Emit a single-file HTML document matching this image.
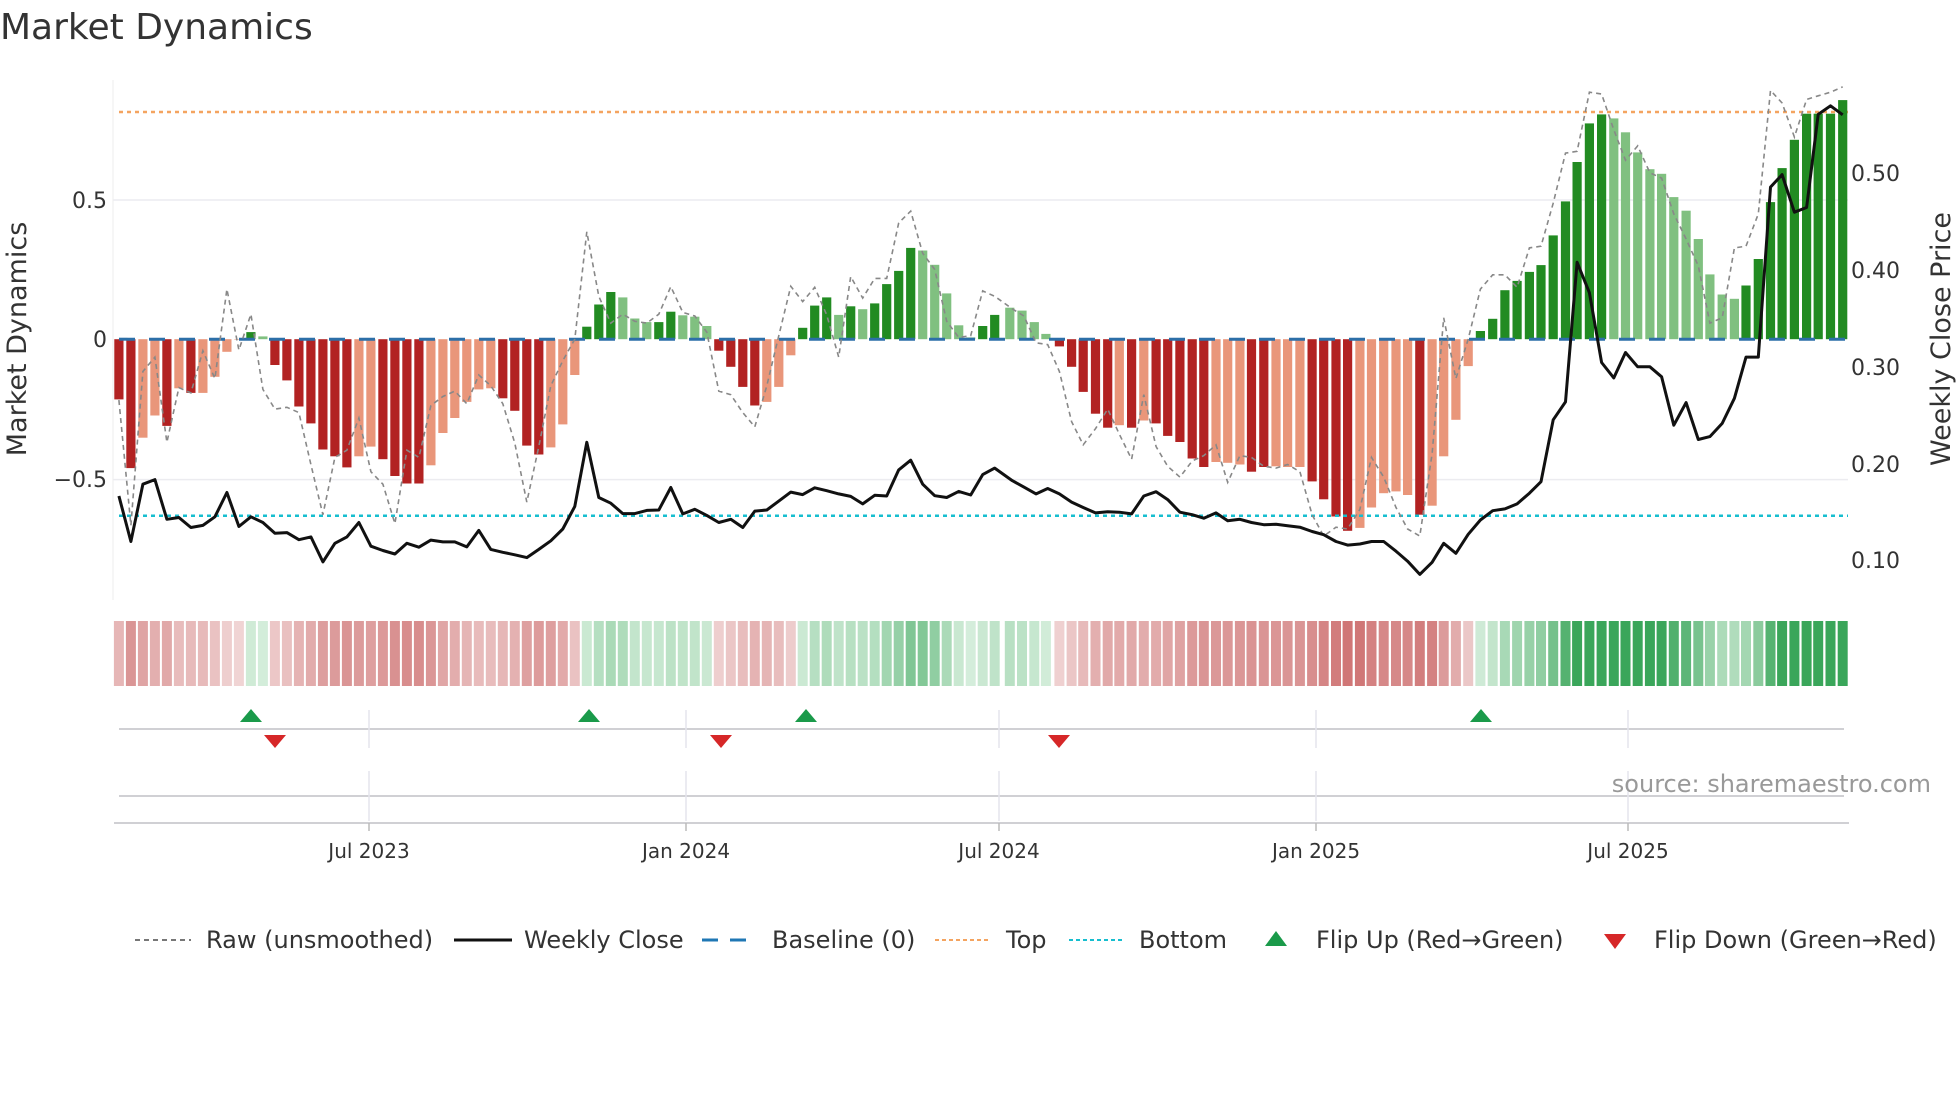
<!DOCTYPE html>
<html><head><meta charset="utf-8"><style>
html,body{margin:0;padding:0;background:#fff;width:1960px;height:1102px;overflow:hidden}
svg text{font-family:"DejaVu Sans","Liberation Sans",sans-serif}
</style></head><body>
<svg id="s" width="1960" height="1102" viewBox="0 0 1960 1102">
<rect width="1960" height="1102" fill="#fff"/>
<text x="0" y="39" font-size="36" fill="#333">Market Dynamics</text>
<g id="g"></g>
<text transform="translate(26,339) rotate(-90)" text-anchor="middle" font-size="27" fill="#333">Market Dynamics</text>
<text transform="translate(1950,339) rotate(-90)" text-anchor="middle" font-size="27" fill="#333">Weekly Close Price</text>
<g font-size="22" fill="#333" text-anchor="end">
<text x="107" y="208">0.5</text><text x="107" y="347">0</text><text x="107" y="487">−0.5</text>
</g>
<g font-size="22" fill="#333">
<text x="1851" y="181">0.50</text><text x="1851" y="278">0.40</text><text x="1851" y="375">0.30</text><text x="1851" y="472">0.20</text><text x="1851" y="568">0.10</text>
</g>
<g font-size="20" fill="#333" text-anchor="middle">
<text x="369" y="858">Jul 2023</text><text x="686" y="858">Jan 2024</text><text x="999" y="858">Jul 2024</text><text x="1316" y="858">Jan 2025</text><text x="1628" y="858">Jul 2025</text>
</g>
<text x="1931" y="792" text-anchor="end" font-size="24" fill="#999">source: sharemaestro.com</text>
<g font-size="24" fill="#333">
<line x1="135" y1="940" x2="191" y2="940" stroke="#777" stroke-width="2" stroke-dasharray="5 4"/><text x="206" y="948">Raw (unsmoothed)</text>
<line x1="454" y1="940" x2="512" y2="940" stroke="#111" stroke-width="3"/><text x="524" y="948">Weekly Close</text>
<line x1="702" y1="940" x2="757" y2="940" stroke="#1f77b4" stroke-width="3" stroke-dasharray="16 12"/><text x="772" y="948">Baseline (0)</text>
<line x1="935" y1="940" x2="991" y2="940" stroke="#f4a460" stroke-width="2" stroke-dasharray="4 3"/><text x="1006" y="948">Top</text>
<line x1="1069" y1="940" x2="1125" y2="940" stroke="#17becf" stroke-width="2" stroke-dasharray="4 3"/><text x="1139" y="948">Bottom</text>
<polygon points="1265,946 1287,946 1276,931" fill="#1a9a4a"/><text x="1316" y="948">Flip Up (Red→Green)</text>
<polygon points="1604,934 1626,934 1615,949" fill="#d62728"/><text x="1654" y="948">Flip Down (Green→Red)</text>
</g>
</svg>
<script>
var Y=function(z){return 60+z*0.358};
var z1=[[948,'D'],[1140,'D'],[1055,'L'],[993,'L'],[1022,'D'],[917,'L'],[930,'D'],[930,'L'],[885,'L'],[815,'L'],[780,'L'],[760,'G'],[772,'g'],[852,'D'],[895,'D'],[968,'D'],[1015,'D'],[1088,'D'],[1107,'D'],[1138,'D'],[1107,'L'],[1080,'L'],[1115,'D'],[1162,'D'],[1183,'D'],[1183,'D'],[1132,'L'],[1042,'L'],[1000,'L'],[955,'L'],[920,'L'],[917,'L'],[945,'D'],[980,'D'],[1077,'D'],[1102,'D'],[1082,'L'],[1018,'L'],[880,'L'],[745,'G'],[683,'G'],[648,'G'],[663,'g'],[722,'g'],[732,'g'],[732,'G'],[703,'G'],[713,'g'],[717,'g'],[743,'g'],[812,'D'],[857,'D'],[913,'D'],[965,'D'],[955,'L'],[913,'L'],[825,'L'],[748,'G'],[686,'G'],[663,'G'],[712,'g'],[688,'G'],[696,'g'],[680,'G'],[626,'G'],[589,'G'],[525,'G'],[532,'g'],[572,'g'],[652,'g'],[741,'g'],[775,'g'],[743,'G'],[712,'G']];
var z2=[[16,692,'g'],[36,700,'g'],[56,732,'g'],[75,765,'g'],[97,800,'D'],[117,857,'D'],[136,927,'D'],[156,988,'D'],[176,1027,'D'],[195,1020,'L'],[215,1027,'D'],[235,1007,'L'],[255,1015,'D'],[274,1050,'D'],[294,1067,'D'],[314,1113,'D'],[333,1137,'D'],[353,1123,'L'],[372,1125,'L'],[392,1130,'L'],[411,1150,'D'],[431,1137,'D'],[451,1135,'L'],[470,1137,'L'],[490,1137,'L'],[510,1177,'D'],[529,1227,'D'],[549,1275,'D'],[568,1315,'D'],[588,1307,'L'],[607,1250,'L'],[627,1210,'L'],[647,1205,'L'],[666,1215,'L'],[686,1270,'D'],[706,1245,'L'],[725,1107,'L'],[745,1005,'L'],[765,855,'L'],[785,757,'G'],[805,723,'G'],[825,643,'G'],[845,617,'G'],[865,592,'G'],[884,573,'G'],[904,490,'G'],[924,395,'G'],[943,285,'G'],[963,177,'G'],[983,152,'G'],[1003,163,'g'],[1022,202,'g'],[1042,258,'g'],[1062,305,'g'],[1081,318,'g'],[1101,383,'g'],[1121,421,'g'],[1141,500,'g'],[1160,599,'g'],[1180,655,'g'],[1200,667,'g'],[1219,630,'G'],[1239,556,'G'],[1259,397,'G'],[1278,302,'G'],[1298,223,'G'],[1318,150,'G'],[1337,150,'G'],[1357,150,'G'],[1377,112,'G']];
var bars=[];
z1.forEach(function(b,k){bars.push([100+(33+20.9*k)*0.574,Y(b[0]),b[1]])});
z2.forEach(function(b){bars.push([1000+b[0]*0.612,Y(b[1]),b[2]])});
var col={D:'#b22222',L:'#e9967a',G:'#228b22',g:'#80c080'};
var Z=339.2,h='';
h+='<line x1="113" y1="200" x2="1848" y2="200" stroke="#ececf0" stroke-width="1.5"/>';
h+='<line x1="113" y1="479.6" x2="1848" y2="479.6" stroke="#ececf0" stroke-width="1.5"/>';
h+='<line x1="113" y1="80" x2="113" y2="600" stroke="#eee" stroke-width="1"/>';
h+='<line x1="119" y1="112" x2="1848" y2="112" stroke="#f4a460" stroke-width="2.5" stroke-dasharray="4 4"/>';
bars.forEach(function(b){var y=b[1],top=Math.min(y,Z),hh=Math.abs(y-Z);if(hh<0.5)hh=0.5;
h+='<rect x="'+(b[0]-4.6).toFixed(1)+'" y="'+top.toFixed(1)+'" width="9.2" height="'+hh.toFixed(1)+'" fill="'+col[b[2]]+'"/>';});
h+='<line x1="119" y1="339.2" x2="1848" y2="339.2" stroke="#2c6fa8" stroke-width="3" stroke-dasharray="16 14"/>';
h+='<line x1="119" y1="515.7" x2="1848" y2="515.7" stroke="#17becf" stroke-width="2.5" stroke-dasharray="4 4"/>';
var r1=[950,1300,870,830,1068,915,930,812,890,640,810,710,920,975,970,985,1130,1270,1110,1090,1000,1150,1185,1295,1090,1110,965,940,925,960,880,910,960,1070,1235,1080,910,840,780,480,660,735,710,730,735,710,633,705,715,760,925,935,985,1025,910,770,632,675,635,712,830,605,665,610,610,455,422,540,585,730,775,770,645,660];
var r2=[[20,695],[39,715],[59,790],[78,795],[97,870],[117,1010],[136,1075],[156,1030],[176,975],[195,1045],[215,1115],[235,935],[255,1080],[274,1135],[294,1165],[314,1120],[333,1105],[353,1075],[372,1180],[392,1105],[411,1110],[431,1135],[451,1140],[470,1130],[490,1150],[510,1270],[529,1330],[549,1305],[568,1310],[588,1255],[607,1110],[627,1165],[647,1250],[666,1310],[686,1330],[706,1100],[725,720],[745,890],[765,780],[785,640],[805,600],[825,600],[845,635],[865,525],[884,520],[904,400],[924,260],[943,255],[963,90],[983,95],[1003,195],[1022,280],[1042,240],[1062,315],[1081,330],[1101,430],[1121,500],[1141,575],[1160,735],[1180,720],[1200,525],[1219,520],[1239,430],[1259,85],[1278,120],[1298,215],[1318,110],[1337,100],[1357,90],[1377,75]];
var p=[];r1.forEach(function(v,k){p.push((100+(33+20.9*k)*0.574).toFixed(1)+','+Y(v).toFixed(1))});
r2.forEach(function(v){p.push((1000+v[0]*0.612).toFixed(1)+','+Y(v[1]).toFixed(1))});
h+='<polyline points="'+p.join(' ')+'" fill="none" stroke="#888" stroke-width="1.6" stroke-dasharray="5 4"/>';
var c1=[1218,1345,1185,1172,1283,1278,1306,1300,1276,1208,1303,1276,1292,1322,1320,1340,1332,1402,1350,1332,1292,1358,1370,1380,1350,1361,1341,1346,1346,1360,1314,1367,1375,1382,1390,1367,1343,1310,1247,1068,1222,1238,1267,1267,1258,1257,1194,1268,1255,1272,1292,1283,1306,1260,1257,1232,1207,1214,1195,1203,1212,1219,1240,1216,1218,1145,1118,1185,1217,1222,1205,1215,1158,1140];
var c2=[[20,1175],[39,1193],[59,1212],[78,1197],[97,1212],[117,1235],[136,1250],[156,1265],[176,1262],[195,1263],[215,1268],[235,1218],[255,1206],[274,1228],[294,1263],[314,1270],[333,1280],[353,1265],[372,1287],[392,1283],[411,1292],[431,1298],[451,1297],[470,1301],[490,1305],[510,1317],[529,1326],[549,1345],[568,1355],[588,1352],[607,1345],[627,1345],[647,1372],[666,1400],[686,1437],[706,1403],[725,1350],[745,1378],[765,1325],[785,1285],[805,1259],[825,1254],[845,1240],[865,1210],[884,1178],[904,1005],[924,955],[943,565],[963,650],[983,845],[1003,888],[1022,817],[1042,857],[1062,857],[1081,885],[1101,1020],[1121,957],[1141,1060],[1160,1052],[1180,1015],[1200,945],[1219,830],[1239,830],[1259,355],[1278,320],[1298,425],[1318,412],[1337,152],[1357,128],[1377,153]];
p=[];c1.forEach(function(v,k){p.push((100+(33+20.9*k)*0.574).toFixed(1)+','+Y(v).toFixed(1))});
c2.forEach(function(v){p.push((1000+v[0]*0.612).toFixed(1)+','+Y(v[1]).toFixed(1))});
h+='<polyline points="'+p.join(' ')+'" fill="none" stroke="#111" stroke-width="3" stroke-linejoin="round"/>';
function mix(a,b,t){return 'rgb('+a.map(function(x,i){return Math.round(x+(b[i]-x)*t)}).join(',')+')'}
bars.forEach(function(b){var v=(Z-b[1])/277;var s=(b[2]=='D'||b[2]=='L')?'r':'g';var t=Math.min(1,Math.abs(v)/0.75);var c;
if(s=='r')c=mix([240,212,212],[205,110,110],t);else c=mix([214,238,220],[58,166,90],Math.min(1,Math.abs(v)/0.6));
h+='<rect x="'+(b[0]-5).toFixed(1)+'" y="621" width="10" height="65" fill="'+c+'"/>';});
h+='<line x1="119" y1="729" x2="1844" y2="729" stroke="#d0d0d4" stroke-width="2"/>';
h+='<line x1="119" y1="796" x2="1844" y2="796" stroke="#d0d0d4" stroke-width="2"/>';
h+='<line x1="114" y1="823" x2="1849" y2="823" stroke="#d0d0d4" stroke-width="2"/>';
[369,686,999,1316,1628].forEach(function(x){h+='<line x1="'+x+'" y1="710" x2="'+x+'" y2="748" stroke="#e4e4ec" stroke-width="1.5"/><line x1="'+x+'" y1="771" x2="'+x+'" y2="821" stroke="#e4e4ec" stroke-width="1.5"/><line x1="'+x+'" y1="823" x2="'+x+'" y2="831" stroke="#bbb" stroke-width="1.5"/>';});
[251,589,806,1481].forEach(function(x){h+='<polygon points="'+(x-11)+',722 '+(x+11)+',722 '+x+',709" fill="#1a9a4a"/>'});
[275,721,1059].forEach(function(x){h+='<polygon points="'+(x-11)+',735 '+(x+11)+',735 '+x+',748" fill="#d62728"/>'});
document.getElementById('g').innerHTML=h;
</script>
</body></html>
